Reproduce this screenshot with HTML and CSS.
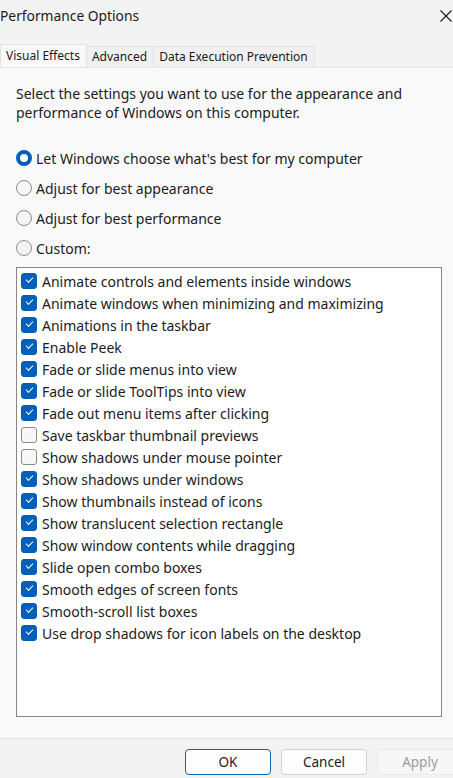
FILE: index.html
```html
<!DOCTYPE html>
<html lang="en">
<head>
    <meta charset="UTF-8">
    <meta name="viewport" content="width=device-width, initial-scale=1.0">
    <title>Performance Options</title>
    <link rel="stylesheet" href="styles.css">
</head>
<body>
<div class="dialog">
    <!-- Title bar -->
    <div class="titlebar">
        <span class="title">Performance Options</span>
        <svg class="close" width="12" height="12" viewBox="0 0 12 12">
            <path d="M0.5 0.5 L11.5 11.5 M11.5 0.5 L0.5 11.5" stroke="#1a1a1a" stroke-width="1.1" fill="none"/>
        </svg>
    </div>

    <!-- Tabs -->
    <div class="tabs">
        <div class="tab active">Visual Effects</div>
        <div class="tab">Advanced</div>
        <div class="tab">Data Execution Prevention</div>
    </div>

    <!-- Tab page -->
    <div class="page">
        <p class="intro">Select the settings you want to use for the appearance and performance of Windows on this computer.</p>

        <div class="radios">
            <label class="radio checked"><span class="dot"></span>Let Windows choose what's best for my computer</label>
            <label class="radio"><span class="dot"></span>Adjust for best appearance</label>
            <label class="radio"><span class="dot"></span>Adjust for best performance</label>
            <label class="radio"><span class="dot"></span>Custom:</label>
        </div>

        <ul class="effects">
            <li class="on"><span class="box"></span>Animate controls and elements inside windows</li>
            <li class="on"><span class="box"></span>Animate windows when minimizing and maximizing</li>
            <li class="on"><span class="box"></span>Animations in the taskbar</li>
            <li class="on"><span class="box"></span>Enable Peek</li>
            <li class="on"><span class="box"></span>Fade or slide menus into view</li>
            <li class="on"><span class="box"></span>Fade or slide ToolTips into view</li>
            <li class="on"><span class="box"></span>Fade out menu items after clicking</li>
            <li><span class="box"></span>Save taskbar thumbnail previews</li>
            <li><span class="box"></span>Show shadows under mouse pointer</li>
            <li class="on"><span class="box"></span>Show shadows under windows</li>
            <li class="on"><span class="box"></span>Show thumbnails instead of icons</li>
            <li class="on"><span class="box"></span>Show translucent selection rectangle</li>
            <li class="on"><span class="box"></span>Show window contents while dragging</li>
            <li class="on"><span class="box"></span>Slide open combo boxes</li>
            <li class="on"><span class="box"></span>Smooth edges of screen fonts</li>
            <li class="on"><span class="box"></span>Smooth-scroll list boxes</li>
            <li class="on"><span class="box"></span>Use drop shadows for icon labels on the desktop</li>
        </ul>
    </div>

    <!-- Buttons -->
    <div class="footer">
        <button class="btn default">OK</button>
        <button class="btn">Cancel</button>
        <button class="btn disabled">Apply</button>
    </div>
</div>
</body>
</html>
```

FILE: styles.css
```css
body {
    font-family: "Noto Sans", "Open Sans", Arial, sans-serif;
    font-size: 14px;
    color: #1b1b1b;
    background: #f3f3f3;
    margin: 0;
    padding: 0;
}
.dialog {
    width: 453px;
    height: 778px;
    overflow: hidden;
    display: flex;
    flex-direction: column;
}
/* Title bar */
.titlebar {
    height: 44px;
    flex-shrink: 0;
    display: flex;
    justify-content: space-between;
    padding: 0 1px 0 0;
    box-sizing: border-box;
}
.title {
    font-size: 13.8px;
    margin-top: 6px;
}
.close {
    margin-top: 10px;
}
/* Tabs */
.tabs {
    display: flex;
    height: 23px;
    flex-shrink: 0;
    align-items: flex-end;
    padding-left: 1px;
}
.tab {
    height: 21px;
    line-height: 20px;
    padding: 0 6px 0 5px;
    font-size: 12px;
    background: #f0f0f0;
    border: 1px solid #e3e3e3;
    border-bottom: none;
    box-sizing: border-box;
    margin-left: -1px;
}
.tab.active {
    height: 23px;
    line-height: 21px;
    background: #f9f9f9;
    padding: 0 6px 0 5px;
    position: relative;
    z-index: 1;
}
/* Tab page */
.page {
    background: #f9f9f9;
    border-top: 1px solid #e8e8e8;
    padding: 16px 11px 0 16px;
    flex-grow: 1;
}
.intro {
    margin: 0 0 25px 0;
    line-height: 19px;
    padding-right: 20px;
}
.radios {
    display: flex;
    flex-direction: column;
    gap: 8px;
    margin-bottom: 8px;
}
.radio {
    display: flex;
    align-items: center;
    height: 22px;
}
.radio .dot {
    width: 16px;
    height: 16px;
    border-radius: 50%;
    border: 1px solid #8a8a8a;
    background: #f5f5f5;
    box-sizing: border-box;
    margin-right: 4px;
}
.radio.checked .dot {
    border: 4px solid #005fb8;
    background: #ffffff;
}
.effects {
    list-style: none;
    margin: 0;
    padding: 2px 0 0 4px;
    background: #ffffff;
    border: 1px solid #868686;
    height: 450px;
    box-sizing: border-box;
}
.effects li {
    display: flex;
    align-items: center;
    height: 22px;
}
.effects .box {
    width: 16px;
    height: 16px;
    border-radius: 3px;
    border: 1px solid #8a8a8a;
    background: #f7f7f7;
    box-sizing: border-box;
    margin-right: 5px;
    position: relative;
}
.effects li.on .box {
    background: #005fb8;
    border-color: #005fb8;
}
/* tick mark */
.effects li.on .box::after {
    content: "";
    position: absolute;
    left: 4px;
    top: 3px;
    width: 6px;
    height: 3px;
    border-left: 1px solid #ffffff;
    border-bottom: 1px solid #ffffff;
    transform: rotate(-45deg);
}
/* Footer */
.footer {
    height: 40px;
    flex-shrink: 0;
    box-sizing: border-box;
    border-top: 1px solid #e5e5e5;
    background: #f3f3f3;
    display: flex;
    align-items: flex-start;
    padding: 10px 0 0 185px;
    gap: 10px;
}
.btn {
    width: 86px;
    height: 26px;
    font-family: "Noto Sans", "Open Sans", Arial, sans-serif;
    font-size: 13.5px;
    color: #1b1b1b;
    background: #fdfdfd;
    border: 1px solid #d0d0d0;
    border-radius: 4px;
    padding: 0;
    flex-shrink: 0;
}
.btn.default {
    border-color: #0067c0;
}
.btn.disabled {
    color: #9d9d9d;
    background: #f7f7f7;
    border-color: #e8e8e8;
}
```
